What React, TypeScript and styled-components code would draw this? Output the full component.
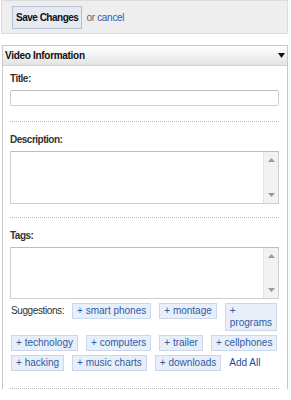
import styled, { createGlobalStyle } from 'styled-components';

const GlobalStyle = createGlobalStyle`
    body {
        margin: 0;
        background: #fff;
        font-family: "Liberation Sans", Arial, sans-serif;
    }
`;

const Page = styled.div`
    width: 287px;
    margin-left: 1px;
`;

const ActionBar = styled.div`
    display: flex;
    align-items: center;
    gap: 4px;
    height: 32px;
    padding-left: 10px;
    background: #eeeeee;
    border: 1px solid #dcdcdc;
`;

const SaveButton = styled.button`
    height: 23px;
    padding: 0 3px;
    background: #e4e9f2;
    border: 1px solid #b6c1d4;
    font-family: inherit;
    font-size: 10px;
    font-weight: bold;
    letter-spacing: -0.5px;
    color: #111;
`;

const OrText = styled.span`
    font-size: 10px;
    letter-spacing: -0.3px;
    color: #666;
`;

const CancelLink = styled.a`
    color: #2a5db0;
    text-decoration: none;
`;

const Panel = styled.div`
    margin-top: 11px;
    margin-left: 1px;
    border: 1px solid #c8c8c8;
    border-bottom: none;
`;

const PanelHeader = styled.div`
    display: flex;
    align-items: center;
    justify-content: space-between;
    height: 19px;
    padding: 0 2px 0 2px;
    background: linear-gradient(#ffffff, #e3e3e3);
    border-bottom: 1px solid #d2d2d2;
    font-size: 10px;
    font-weight: bold;
    letter-spacing: -0.3px;
    color: #111;
`;

const PanelBody = styled.div`
    padding: 0 8px 0 7px;
`;

const Section = styled.div<{ $bottom?: number }>`
    padding: 12px 0 ${p => p.$bottom ?? 14}px;
    border-bottom: 1px dotted #b8b8b8;

    &:first-child {
        padding-top: 7px;
    }
`;

const Label = styled.div`
    margin-bottom: 5px;
    font-size: 10px;
    font-weight: bold;
    letter-spacing: -0.5px;
    line-height: 12px;
    color: #333;
`;

const TextInput = styled.input`
    display: block;
    box-sizing: border-box;
    width: 100%;
    height: 16px;
    border: 1px solid #cfcfcf;
    border-top-color: #bdbdbd;
    border-radius: 2px;
`;

const TextBox = styled.div<{ $height: number }>`
    display: flex;
    box-sizing: border-box;
    height: ${p => p.$height}px;
    border: 1px solid #cfcfcf;
    border-top-color: #bdbdbd;
`;

const TextArea = styled.textarea`
    flex: 1;
    border: none;
    resize: none;
    outline: none;
`;

const ScrollBar = styled.div`
    display: flex;
    flex-direction: column;
    justify-content: space-between;
    align-items: center;
    width: 15px;
    padding: 6px 0;
    box-sizing: border-box;
    background: #f2f2f2;
    border-left: 1px solid #e2e2e2;
`;

const Suggestions = styled.div`
    display: flex;
    flex-wrap: wrap;
    align-items: flex-start;
    gap: 4px 8px;
    margin-top: 4px;
    margin-left: 1px;
    font-size: 10px;
    line-height: 12px;
`;

const SuggestLabel = styled.span`
    padding-top: 2px;
    letter-spacing: -0.4px;
    color: #333;
`;

const Chip = styled.span<{ $stacked?: boolean }>`
    padding: 1px 4px;
    background: #e9eff9;
    border: 1px solid #cad7ec;
    color: #2d5ca5;
    ${p => p.$stacked && 'width: min-content;'}
`;

const AddAll = styled.a`
    padding-top: 2px;
    color: #1c4c9c;
    text-decoration: none;
`;

function Arrow({ up }: { up?: boolean }) {
    return (
        <svg width="7" height="4" viewBox="0 0 7 4">
            <path d={up ? 'M0 4 L3.5 0 L7 4 Z' : 'M0 0 L3.5 4 L7 0 Z'} fill="#9a9a9a" />
        </svg>
    );
}

function FakeTextArea({ height }: { height: number }) {
    return (
        <TextBox $height={height}>
            <TextArea />
            <ScrollBar>
                <Arrow up />
                <Arrow />
            </ScrollBar>
        </TextBox>
    );
}

const tags = [
    'smart phones', 'montage', 'programs', 'technology', 'computers',
    'trailer', 'cellphones', 'hacking', 'music charts', 'downloads',
];

export default function App() {
    return (
        <Page>
            <GlobalStyle />
            <ActionBar>
                <SaveButton>Save Changes</SaveButton>
                <OrText>or <CancelLink href="#">cancel</CancelLink></OrText>
            </ActionBar>
            <Panel>
                <PanelHeader>
                    <span>Video Information</span>
                    <svg width="7" height="5" viewBox="0 0 7 5">
                        <path d="M0 0 L7 0 L3.5 5 Z" fill="#111" />
                    </svg>
                </PanelHeader>
                <PanelBody>
                    <Section $bottom={15}>
                        <Label>Title:</Label>
                        <TextInput />
                    </Section>
                    <Section $bottom={13}>
                        <Label>Description:</Label>
                        <FakeTextArea height={53} />
                    </Section>
                    <Section $bottom={17}>
                        <Label>Tags:</Label>
                        <FakeTextArea height={52} />
                        <Suggestions>
                            <SuggestLabel>Suggestions:</SuggestLabel>
                            {tags.map(t => (
                                <Chip key={t} $stacked={t === 'programs'}>+ {t}</Chip>
                            ))}
                            <AddAll href="#">Add All</AddAll>
                        </Suggestions>
                    </Section>
                </PanelBody>
            </Panel>
        </Page>
    );
}
